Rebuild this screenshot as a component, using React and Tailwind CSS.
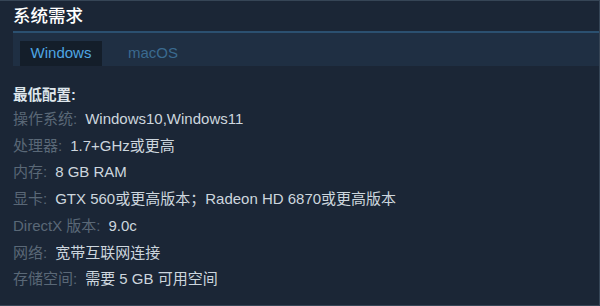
export default function App() {
  const rows = [
    ["操作系统:", "Windows10,Windows11"],
    ["处理器:", "1.7+GHz或更高"],
    ["内存:", "8 GB RAM"],
    ["显卡:", "GTX 560或更高版本；Radeon HD 6870或更高版本"],
    ["DirectX 版本:", "9.0c"],
    ["网络:", "宽带互联网连接"],
    ["存储空间:", "需要 5 GB 可用空间"],
  ];
  return (
    <div
      className="w-[600px] h-[306px] bg-[#1b2636] border-t border-r border-b border-[#364556] overflow-hidden"
      style={{ fontFamily: '"Liberation Sans", "Noto Sans CJK SC", sans-serif' }}
    >
      <div className="pl-[13px] pt-[4px] text-[17.5px] leading-[22px] text-white font-medium">系统需求</div>
      <div className="ml-[13px] mt-[4px] h-[35px] border-t-2 border-[#2b5070] bg-[#1f2f43] flex items-end pl-[7px]">
        <div className="h-[25px] w-[82px] bg-[#141e2a] flex items-center justify-center text-[15px] text-[#4ea6e4]">Windows</div>
        <div className="h-[25px] ml-[26px] flex items-center text-[15px] text-[#3a6a90]">macOS</div>
      </div>
      <div className="pl-[13px] pt-[19px]">
        <div className="text-[14.5px] leading-[20px] text-[#dfe6ec] font-bold">最低配置:</div>
        <div className="mt-[1px] flex flex-col">
          {rows.map(([k, v]) => (
            <div key={k} className="h-[26.7px] flex items-center text-[15px] whitespace-nowrap">
              <span className="text-[#5a6877]">{k}</span>
              <span className="ml-[8px] text-[#cdd6de]">{v}</span>
            </div>
          ))}
        </div>
      </div>
    </div>
  );
}
